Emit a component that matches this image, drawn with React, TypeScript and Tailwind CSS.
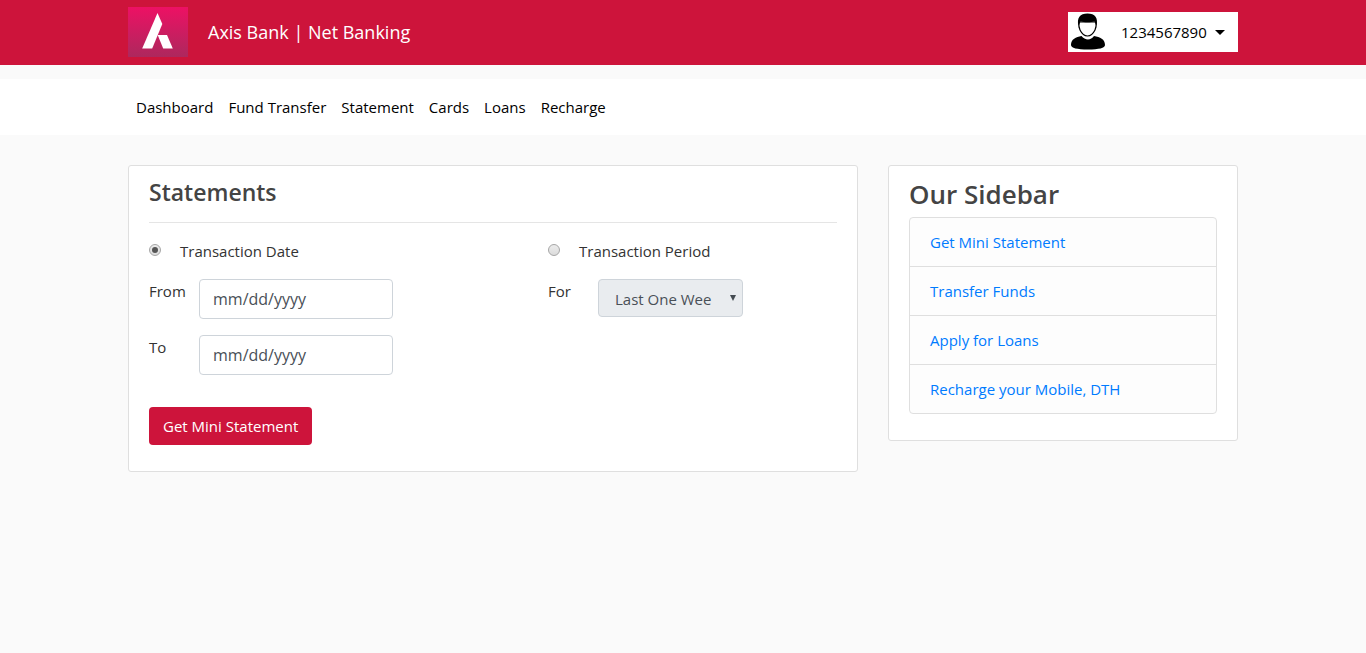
import React, { useState } from "react";

const navItems = ["Dashboard", "Fund Transfer", "Statement", "Cards", "Loans", "Recharge"];
const quickLinks = ["Get Mini Statement", "Transfer Funds", "Apply for Loans", "Recharge your Mobile, DTH"];

function BankLogo() {
  return (
    <svg className="h-[50px] w-[60px]" viewBox="0 0 60 50" role="img" aria-label="Axis Bank">
      <defs>
        <linearGradient id="logo-bg" x1="0" y1="0" x2="0" y2="1">
          <stop offset="0" stopColor="#ed1164" />
          <stop offset="1" stopColor="#ad285d" />
        </linearGradient>
      </defs>
      <rect width="60" height="50" fill="url(#logo-bg)" />
      <path d="M29.5 6 L34.3 17 L24.2 41.5 H14.2 Z" fill="#fff" />
      <path d="M29.7 28 H39 L44.8 41.5 H35.2 Z" fill="#fff" />
    </svg>
  );
}

function UserIcon() {
  return (
    <svg className="h-10 w-10" viewBox="0 0 40 40" aria-hidden="true">
      <path d="M3 33 C3 27 8 25 13.500 24 C17 28.500 23 28.500 26 24 C32 25 37 27 37 33 C37 36 31 37.500 20 37.500 C9 37.500 3 36 3 33 Z" fill="#000" />
      <path d="M11 10 C10.500 14 11 16 12 18 C14 22 17 24 19.500 24 C22 24 25 22 27 18 C28 16 28.500 14 28 10 Z" fill="#fff" stroke="#000" strokeWidth="1.200" />
      <path d="M10.500 14 C8.500 6 12 1.500 19.500 1.500 C27 1.500 30.500 6 28.500 14 L26.500 9.500 C23 10.500 16 10.500 12.500 9.500 Z" fill="#000" />
    </svg>
  );
}

function DateField({ id, label }: { id: string; label: string }) {
  return (
    <div className="flex items-start">
      <label htmlFor={id} className="w-[50px] shrink-0 leading-6">{label}</label>
      <input
        id={id}
        type="text"
        placeholder="mm/dd/yyyy"
        className="h-10 w-[194px] rounded border border-[#ced4da] bg-white px-[13px] text-base text-[#495057] placeholder:text-[#495057]"
      />
    </div>
  );
}

function ModeRadio({ value, label, mode, onChange }: { value: string; label: string; mode: string; onChange: (v: string) => void }) {
  return (
    <label className="flex items-center gap-[19px] leading-6">
      <input
        type="radio"
        name="mode"
        value={value}
        checked={mode === value}
        onChange={() => onChange(value)}
        className="mb-0.5 grid size-3 appearance-none place-items-center rounded-full border border-[#a6a6a6] bg-linear-to-b from-[#ececec] to-[#dcdcdc] before:size-1.5 before:rounded-full checked:before:bg-[#555]"
      />
      {label}
    </label>
  );
}

export default function App() {
  const [mode, setMode] = useState("date");
  return (
    <div className="min-h-screen bg-[#fafafa] font-['Open_Sans','Noto_Sans',sans-serif] text-[15px] text-[#333]">
      <header className="bg-[#cd143b]">
        <div className="mx-auto flex h-[65px] max-w-[1140px] items-center justify-between px-[15px] pb-px">
          <a href="#" className="flex items-center gap-5 text-lg text-white">
            <BankLogo />
            <span>Axis Bank | Net Banking</span>
          </a>
          <button type="button" className="flex h-10 w-[170px] items-center bg-white pr-[13px] text-black">
            <UserIcon />
            <span className="ml-[13px]">1234567890</span>
            <svg className="ml-auto h-[5px] w-[10px]" viewBox="0 0 10 5" aria-hidden="true">
              <path d="M0 0 H10 L5 5 Z" fill="#000" />
            </svg>
          </button>
        </div>
      </header>

      <nav className="mt-3.5 bg-white">
        <ul className="mx-auto flex h-14 max-w-[1140px] items-center gap-[15px] px-[23px] text-black">
          {navItems.map((item) => (
            <li key={item}>
              <a href="#" className="block py-2">{item}</a>
            </li>
          ))}
        </ul>
      </nav>

      <main className="mx-auto flex max-w-[1140px] items-start gap-[30px] px-[15px] pt-[30px]">
        <section className="min-w-0 flex-1 rounded-[3px] border border-[#dfdfdf] bg-white px-5 pt-3 pb-[26px]">
          <h2 className="text-[23px] leading-7 font-semibold text-[#444]">Statements</h2>
          <hr className="mt-4 border-[#e5e5e5]" />
          <form className="pt-4" onSubmit={(e) => e.preventDefault()}>
            <div className="grid grid-cols-[399fr_289fr]">
              <div className="flex flex-col gap-4">
                <ModeRadio value="date" label="Transaction Date" mode={mode} onChange={setMode} />
                <DateField id="from" label="From" />
                <DateField id="to" label="To" />
              </div>
              <div className="flex flex-col gap-4">
                <ModeRadio value="period" label="Transaction Period" mode={mode} onChange={setMode} />
                <div className="flex items-start">
                  <label htmlFor="period" className="w-[50px] shrink-0 leading-6">For</label>
                  <div className="relative w-[145px]">
                    <select id="period" className="h-[38px] w-full appearance-none overflow-hidden rounded border border-[#ced4da] bg-[#e9ecef] pt-0.5 pr-[30px] pl-4 text-[#495057]">
                      <option>Last One Week</option>
                      <option>Last One Month</option>
                    </select>
                    <svg className="pointer-events-none absolute top-4 right-[7px] h-[6px] w-[6px]" viewBox="0 0 6 6" aria-hidden="true">
                      <path d="M0 0 H6 L3 6 Z" fill="#444b52" />
                    </svg>
                  </div>
                </div>
              </div>
            </div>
            <button type="submit" className="mt-8 h-[38px] rounded bg-[#cd143b] px-3.5 text-white">Get Mini Statement</button>
          </form>
        </section>

        <aside className="w-[350px] shrink-0 rounded-[3px] border border-[#dfdfdf] bg-white px-5 pt-3 pb-[26px]">
          <h2 className="text-[26px] leading-8 font-semibold text-[#444]">Our Sidebar</h2>
          <ul className="mt-[7px] divide-y divide-[#dfdfdf] rounded border border-[#dfdfdf] bg-[#fdfdfd]">
            {quickLinks.map((link) => (
              <li key={link}>
                <a href="#" className="block px-5 py-3 leading-6 text-[#007bff]">{link}</a>
              </li>
            ))}
          </ul>
        </aside>
      </main>
    </div>
  );
}
